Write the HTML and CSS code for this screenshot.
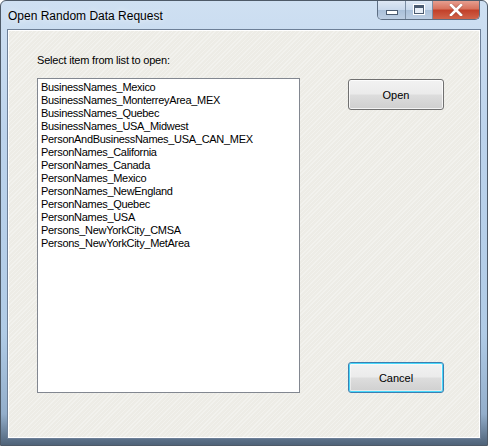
FILE: index.html
```html
<!DOCTYPE html>
<html>
<head>
<meta charset="utf-8">
<link rel="stylesheet" href="styles.css">
</head>
<body>
<div class="window">
  <div class="titlebar">
    <div class="title">Open Random Data Request</div>
    <div class="caption-buttons">
      <div class="cbtn min"><span class="min-glyph"></span></div>
      <div class="cbtn max"><span class="max-glyph"></span></div>
      <div class="cbtn close">
        <svg width="14" height="12" viewBox="0 0 14 12"><path d="M2 1 L12 11 M12 1 L2 11" stroke="#6b3a33" stroke-width="4" stroke-linecap="square" opacity="0.35"/><path d="M2 1 L12 11 M12 1 L2 11" stroke="#fff" stroke-width="2.6" stroke-linecap="square"/></svg>
      </div>
    </div>
  </div>
  <div class="client">
    <div class="label">Select item from list to open:</div>
    <div class="row">
      <div class="listbox">
        <div class="item">BusinessNames_Mexico</div>
        <div class="item">BusinessNames_MonterreyArea_MEX</div>
        <div class="item">BusinessNames_Quebec</div>
        <div class="item">BusinessNames_USA_Midwest</div>
        <div class="item">PersonAndBusinessNames_USA_CAN_MEX</div>
        <div class="item">PersonNames_California</div>
        <div class="item">PersonNames_Canada</div>
        <div class="item">PersonNames_Mexico</div>
        <div class="item">PersonNames_NewEngland</div>
        <div class="item">PersonNames_Quebec</div>
        <div class="item">PersonNames_USA</div>
        <div class="item">Persons_NewYorkCity_CMSA</div>
        <div class="item">Persons_NewYorkCity_MetArea</div>
      </div>
      <div class="buttons">
        <div class="btn">Open</div>
        <div class="btn default">Cancel</div>
      </div>
    </div>
  </div>
</div>
</body>
</html>
```
FILE: styles.css
```css
html, body {
  margin: 0;
  padding: 0;
  background: #fff;
}
.window {
  width: 488px;
  height: 446px;
  box-sizing: border-box;
  border: 1px solid #4e5a68;
  border-radius: 6px 6px 0 0;
  background: linear-gradient(180deg, #cfe0f2 0%, #bcd3ec 30%, #b0cbe6 75%, #93aecb 93%, #4f6379 100%);
  display: flex;
  flex-direction: column;
  overflow: hidden;
}
.titlebar {
  height: 28px;
  display: flex;
  justify-content: space-between;
  align-items: flex-start;
  padding: 0 7px 0 7px;
}
.title {
  font-family: "Liberation Sans", Arial, sans-serif;
  font-size: 12px;
  color: #000;
  margin-top: 7px;
  line-height: 16px;
  text-shadow: 0 0 6px rgba(255,255,255,0.9);
}
.caption-buttons {
  display: flex;
  height: 19px;
  margin-top: -1px;
  border: 1px solid #5d6e83;
  border-top: none;
  border-radius: 0 0 5px 5px;
  overflow: hidden;
}
.cbtn {
  height: 19px;
  display: flex;
  align-items: center;
  justify-content: center;
  box-sizing: border-box;
}
.min {
  width: 28px;
  background: linear-gradient(180deg, #dfe9f5 0%, #c9d9ec 50%, #a9bfd9 51%, #bccde2 100%);
  border-right: 1px solid #7c8ea4;
}
.max {
  width: 27px;
  background: linear-gradient(180deg, #dfe9f5 0%, #c9d9ec 50%, #a9bfd9 51%, #bccde2 100%);
  border-right: 1px solid #7c8ea4;
}
.close {
  width: 46px;
  background: linear-gradient(180deg, #e8a496 0%, #d8745f 45%, #c2412a 55%, #d0644b 100%);
}
.min-glyph {
  width: 10px;
  height: 3px;
  margin-top: 6px;
  background: #fff;
  border: 1px solid #4b5b70;
}
.max-glyph {
  width: 8px;
  height: 5px;
  border: 1px solid #4b5b70;
  border-top-width: 3px;
  background: #e8eef6;
  outline: 1px solid #fff;
}
.client {
  margin: 0 6px 6px 6px;
  flex: 1;
  border: 1px solid #6d7f97;
  box-shadow: inset 0 0 0 1px #ffffff;
  background-color: #edece6;
  background-image: repeating-linear-gradient(135deg, rgba(255,255,255,0.3) 0 1px, rgba(0,0,0,0) 1px 3px);
  padding: 24px 0 0 29px;
  font-family: "Liberation Sans", Arial, sans-serif;
  font-size: 11px;
  color: #000;
}
.label {
  line-height: 13px;
  height: 13px;
  margin-bottom: 11px;
  letter-spacing: -0.2px;
}
.row {
  display: flex;
  align-items: stretch;
}
.listbox {
  width: 263px;
  height: 315px;
  box-sizing: border-box;
  border: 1px solid #828790;
  background: #fff;
  padding: 2px 0 0 3px;
}
.item {
  line-height: 13px;
  height: 13px;
  white-space: nowrap;
  letter-spacing: -0.3px;
}
.buttons {
  margin-left: 48px;
  padding-top: 1px;
  display: flex;
  flex-direction: column;
  justify-content: space-between;
}
.btn {
  width: 96px;
  height: 31px;
  box-sizing: border-box;
  border: 1px solid #707070;
  border-radius: 3px;
  background: linear-gradient(180deg, #f2f2f2 0%, #ebebeb 48%, #dddddd 52%, #cfcfcf 100%);
  box-shadow: inset 0 0 0 1px rgba(255,255,255,0.75);
  display: flex;
  align-items: center;
  justify-content: center;
  font-size: 11px;
  color: #000;
}
.btn.default {
  border-color: #3c7fb1;
  box-shadow: inset 0 0 0 1px #48d8fb, inset 0 0 0 2px rgba(255,255,255,0.5);
}
```
